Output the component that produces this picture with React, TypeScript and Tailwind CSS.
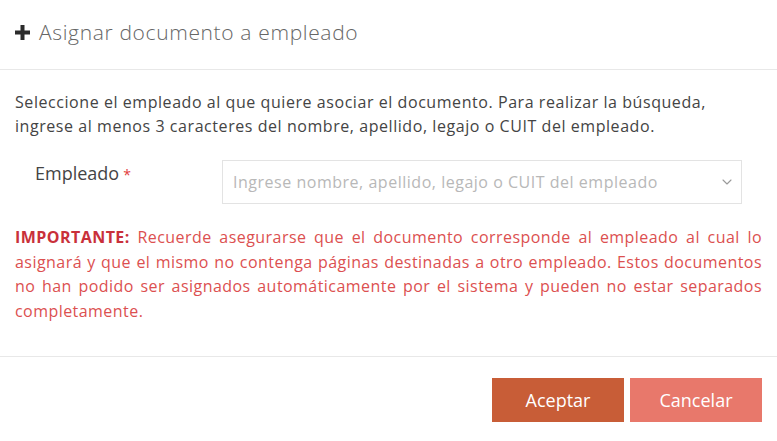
import { ChevronDown } from "lucide-react";

const PlusIcon = () => (
  <svg width="15" height="15" viewBox="0 0 15 15" className="shrink-0">
    <path d="M5.5 0h4v5.5H15v4H9.5V15h-4V9.5H0v-4h5.5z" fill="#2b2b2b" />
  </svg>
);

export default function App() {
  return (
    <div
      className="h-[441px] w-[777px] overflow-hidden bg-white text-[#555]"
      style={{ fontFamily: '"Open Sans", "Liberation Sans", sans-serif' }}
    >
      <div className="flex h-[70px] items-center gap-[9px] border-b border-[#e8e8e8] pl-[15px] pb-[4px]">
        <PlusIcon />
        <h1 className="text-[21px] font-light tracking-[0.65px] text-[#666]">
          Asignar documento a empleado
        </h1>
      </div>

      <div className="px-[15px] pt-[20px]">
        <p className="text-[16px] leading-[24px] tracking-[0.56px] text-[#444]">
          Seleccione el empleado al que quiere asociar el documento. Para realizar la búsqueda,
          <br />
          ingrese al menos 3 caracteres del nombre, apellido, legajo o CUIT del empleado.
        </p>

        <div className="mt-[22px] flex items-start">
          <label className="w-[207px] shrink-0 pl-[20px] pt-[1px] text-[18px] leading-[24px] text-[#444]">
            Empleado<span className="ml-[4px] text-[14px] text-[#e23b3b]">*</span>
          </label>
          <div className="flex h-[44px] w-[520px] items-center justify-between border border-[#e3e3e3] pl-[10px] pr-[6px]">
            <span className="text-[16px] tracking-[0.52px] text-[#b8b8b8]">
              Ingrese nombre, apellido, legajo o CUIT del empleado
            </span>
            <ChevronDown size={16} strokeWidth={1.6} color="#999" />
          </div>
        </div>

        <p className="mt-[21px] text-justify text-[16px] leading-[24.5px] tracking-[0.45px] text-[#dc5050]">
          <b className="font-bold text-[#c9303a]">IMPORTANTE:</b> Recuerde asegurarse que el documento
          corresponde al empleado al cual lo asignará y que el mismo no contenga páginas destinadas a
          otro empleado. Estos documentos no han podido ser asignados automáticamente por el sistema y
          pueden no estar separados completamente.
        </p>
      </div>

      <div className="mt-[33px] flex justify-end gap-[6px] border-t border-[#e8e8e8] px-[15px] pt-[21px]">
        <button className="h-[44px] w-[132px] bg-[#c85d37] text-[18px] text-white">Aceptar</button>
        <button className="h-[44px] w-[132px] bg-[#e8786b] text-[18px] text-white">Cancelar</button>
      </div>
    </div>
  );
}
